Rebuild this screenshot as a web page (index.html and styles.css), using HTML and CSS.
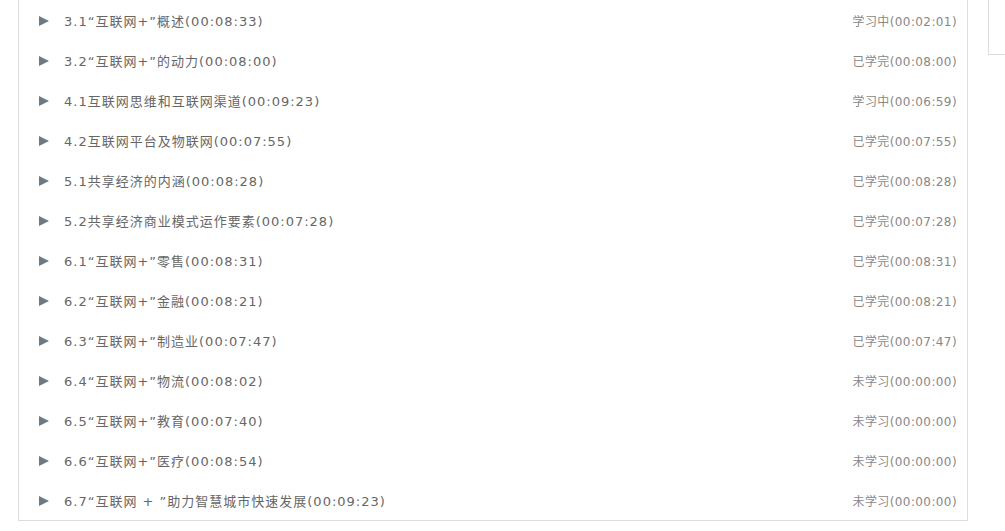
FILE: index.html
```html
<!DOCTYPE html>
<html lang="zh-CN">
<head>
  <meta charset="UTF-8" />
  <meta name="viewport" content="width=device-width, initial-scale=1.0">
  <title>课程目录</title>
  <link rel="stylesheet" href="styles.css">
</head>
<body>
<div class="page">
  <div class="lessons">
    <ul class="lesson-list">
      <li class="lesson"><span class="play"></span><span class="title">3.1“互联网+”概述(00:08:33)</span><span class="state">学习中(00:02:01)</span></li>
      <li class="lesson"><span class="play"></span><span class="title">3.2“互联网+”的动力(00:08:00)</span><span class="state">已学完(00:08:00)</span></li>
      <li class="lesson"><span class="play"></span><span class="title">4.1互联网思维和互联网渠道(00:09:23)</span><span class="state">学习中(00:06:59)</span></li>
      <li class="lesson"><span class="play"></span><span class="title">4.2互联网平台及物联网(00:07:55)</span><span class="state">已学完(00:07:55)</span></li>
      <li class="lesson"><span class="play"></span><span class="title">5.1共享经济的内涵(00:08:28)</span><span class="state">已学完(00:08:28)</span></li>
      <li class="lesson"><span class="play"></span><span class="title">5.2共享经济商业模式运作要素(00:07:28)</span><span class="state">已学完(00:07:28)</span></li>
      <li class="lesson"><span class="play"></span><span class="title">6.1“互联网+”零售(00:08:31)</span><span class="state">已学完(00:08:31)</span></li>
      <li class="lesson"><span class="play"></span><span class="title">6.2“互联网+”金融(00:08:21)</span><span class="state">已学完(00:08:21)</span></li>
      <li class="lesson"><span class="play"></span><span class="title">6.3“互联网+”制造业(00:07:47)</span><span class="state">已学完(00:07:47)</span></li>
      <li class="lesson"><span class="play"></span><span class="title">6.4“互联网+”物流(00:08:02)</span><span class="state">未学习(00:00:00)</span></li>
      <li class="lesson"><span class="play"></span><span class="title">6.5“互联网+”教育(00:07:40)</span><span class="state">未学习(00:00:00)</span></li>
      <li class="lesson"><span class="play"></span><span class="title">6.6“互联网+”医疗(00:08:54)</span><span class="state">未学习(00:00:00)</span></li>
      <li class="lesson"><span class="play"></span><span class="title">6.7“互联网 + ”助力智慧城市快速发展(00:09:23)</span><span class="state">未学习(00:00:00)</span></li>
    </ul>
  </div>
  <div class="side-box"></div>
</div>
</body>
</html>
```

FILE: styles.css
```css
body {
  margin: 0;
  background: #fff;
  font-family: "DejaVu Sans", "Noto Sans CJK SC", sans-serif;
  overflow: hidden;
}

.page {
  display: flex;
  align-items: flex-start;
  padding-left: 18px;
}

.lessons {
  flex-shrink: 0;
  width: 950px;
  box-sizing: border-box;
  border: 1px solid #ddd;
  border-top: none;
}

.lesson-list {
  list-style: none;
  margin: 0;
  padding: 0;
}

.lesson {
  display: flex;
  align-items: center;
  height: 40px;
  padding: 1px 10px 0 20px;
  box-sizing: border-box;
}

.play {
  width: 0;
  height: 0;
  border-top: 5.5px solid transparent;
  border-bottom: 5.5px solid transparent;
  border-left: 10px solid #6b7a84;
  margin-right: 15px;
}

.title {
  flex: 1;
  font-size: 13px;
  letter-spacing: 1px;
  color: #666;
}

.state {
  font-size: 12px;
  letter-spacing: 0.4px;
  color: #888;
}

/* neighbouring panel, only its left corner is in view */
.side-box {
  flex: 1;
  height: 54px;
  margin-left: 20px;
  border-left: 1px solid #ddd;
  border-bottom: 1px solid #ddd;
}
```
